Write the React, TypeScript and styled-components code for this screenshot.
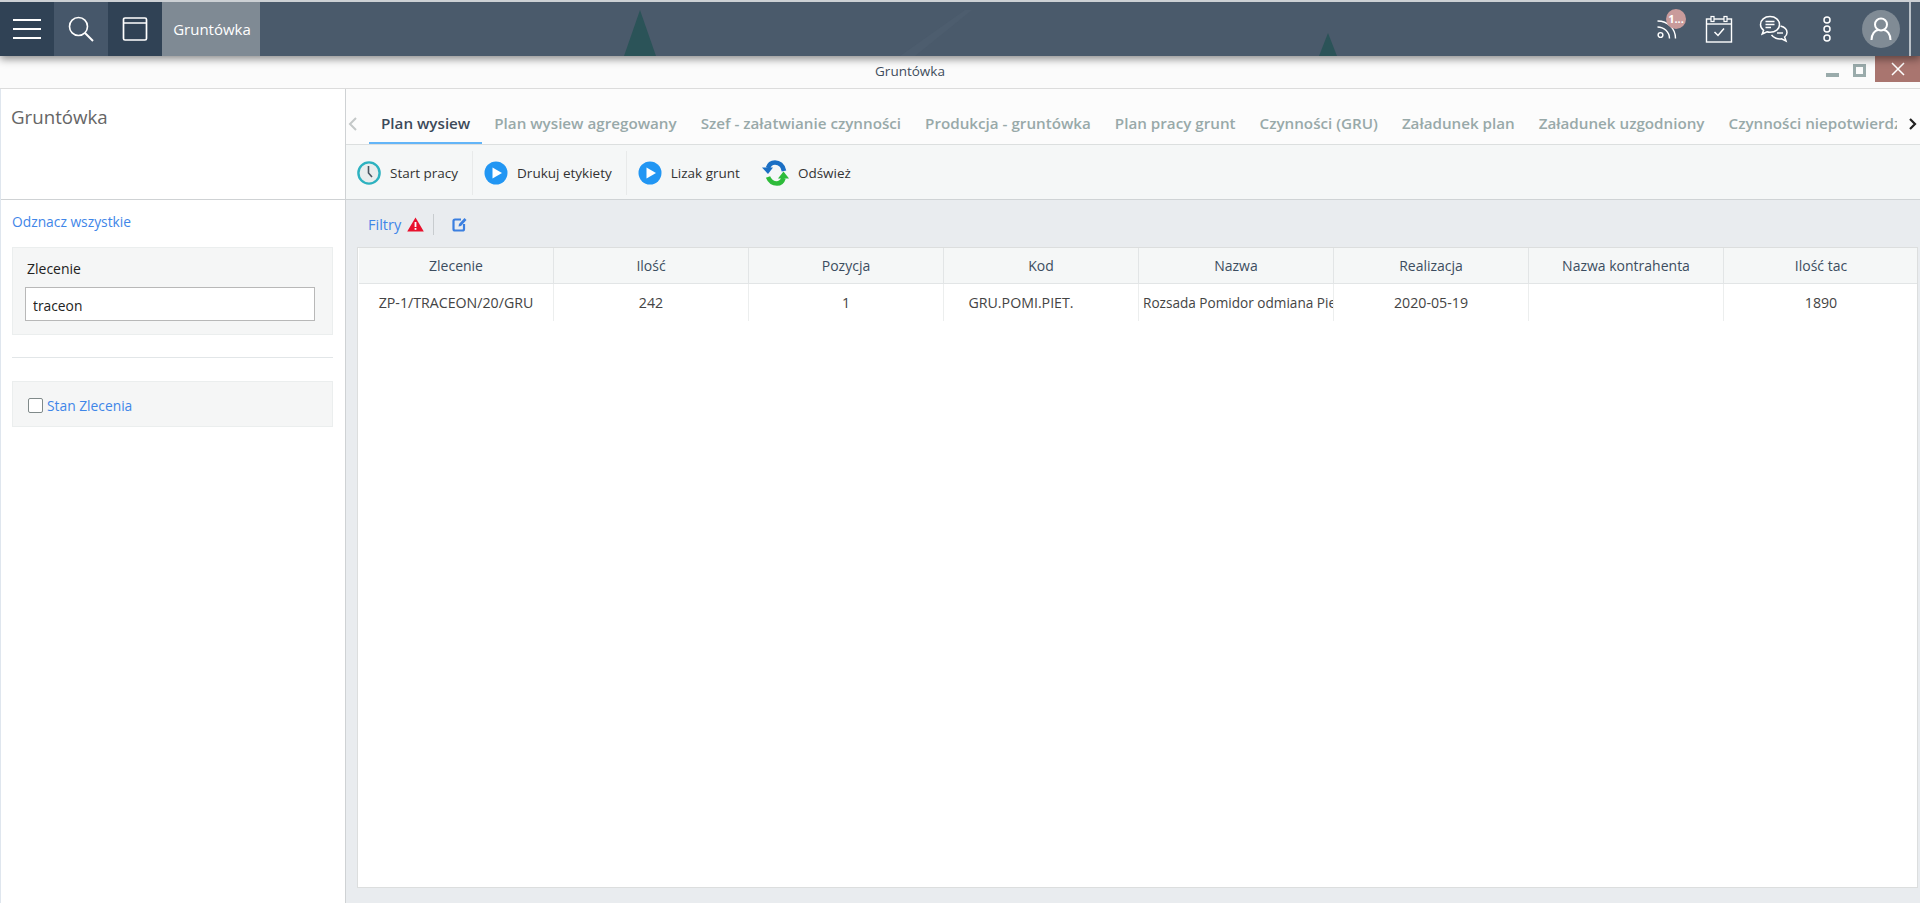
import React from "react";
import styled, { createGlobalStyle } from "styled-components";

const GlobalStyle = createGlobalStyle`
  html, body {
    margin: 0;
    padding: 0;
    background: #fff;
    font-family: "Open Sans", "Noto Sans", sans-serif;
    font-size: 13px;
    overflow: hidden;
  }
  * {
    box-sizing: border-box;
  }
`;

const Page = styled.div`
  display: flex;
  flex-direction: column;
  width: 1920px;
  height: 903px;
  overflow: hidden;
`;

const TopBar = styled.header`
  position: relative;
  z-index: 2;
  display: flex;
  align-items: stretch;
  flex: 0 0 56px;
  border-top: 2px solid #ccd0d4;
  background: #4a5a6b;
  box-shadow: 0 3px 8px rgba(0, 0, 0, 0.45);
`;

const Trees = styled.svg`
  position: absolute;
  left: 0;
  top: 0;
  width: 100%;
  height: 100%;
  filter: blur(0.7px);
`;

const BarButton = styled.div<{ $dark?: boolean }>`
  position: relative;
  display: flex;
  align-items: center;
  justify-content: center;
  width: 54px;
  background: ${(p) => (p.$dark ? "#304255" : "#46576a")};
`;

const OpenTab = styled.div`
  position: relative;
  display: flex;
  align-items: center;
  justify-content: center;
  width: 98px;
  padding-left: 2px;
  background: #7f8a94;
  color: #fff;
  font-size: 15px;
`;

const BarRight = styled.div`
  position: relative;
  display: flex;
  align-items: center;
  margin-left: auto;
  height: 100%;
`;

const BarIcon = styled.div<{ $width: number }>`
  position: relative;
  display: flex;
  align-items: center;
  justify-content: center;
  width: ${(p) => p.$width}px;
  height: 100%;
`;

const Badge = styled.span`
  position: absolute;
  left: 24px;
  top: 7px;
  width: 20px;
  height: 20px;
  border-radius: 50%;
  background: #c99b9b;
  color: #fff;
  font-size: 11px;
  font-weight: 700;
  line-height: 20px;
  text-align: center;
`;

const Avatar = styled.div`
  display: flex;
  align-items: center;
  justify-content: center;
  width: 38px;
  height: 38px;
  margin: 0 9px 0 10px;
  border-radius: 50%;
  background: #808b95;
`;

const BarEdge = styled.div`
  width: 2px;
  height: 100%;
  margin-right: 9px;
  background: #b9c1c8;
`;

const WindowBar = styled.div`
  display: flex;
  flex: 0 0 33px;
  border-bottom: 1px solid #dcdcdc;
  background: #fbfbfb;
`;

const WindowTitle = styled.div`
  flex: 1;
  padding: 6px 6px 0 0;
  color: #3f4d5c;
  font-size: 13.5px;
  text-align: center;
`;

const WindowControls = styled.div`
  display: flex;
  align-items: flex-start;
`;

const Minimize = styled.div`
  width: 13px;
  height: 4px;
  margin: 17px 14px 0 0;
  background: #9aabab;
`;

const Maximize = styled.div`
  width: 13px;
  height: 13px;
  margin: 8px 9px 0 0;
  border: 3px solid #9aabab;
`;

const Close = styled.div`
  display: flex;
  align-items: center;
  justify-content: center;
  width: 45px;
  height: 26px;
  background: #a9756f;
`;

const Main = styled.div`
  display: flex;
  flex: 1;
  min-height: 0;
`;

const Sidebar = styled.aside`
  display: flex;
  flex-direction: column;
  flex: 0 0 346px;
  border-left: 1px solid #dfe6ee;
  border-right: 1px solid #cfd2d4;
  background: #fff;
`;

const SidebarTitle = styled.div`
  flex: 0 0 111px;
  padding: 15px 10px 0;
  border-bottom: 1px solid #cfd2d4;
  color: #666;
  font-size: 18.7px;
`;

const SidebarBody = styled.div`
  padding: 12px 12px 0 11px;
`;

const Link = styled.a`
  color: #3f86e8;
  font-size: 13.8px;
`;

const SelectAll = styled(Link)`
  display: block;
  height: 20px;
  margin-bottom: 15px;
`;

const FilterBox = styled.div<{ $height: number }>`
  height: ${(p) => p.$height}px;
  border: 1px solid #ebeeee;
  background: #f5f6f6;
`;

const FieldLabel = styled.div`
  padding: 11px 0 0 14px;
  color: #222;
  font-size: 14px;
`;

const TextInput = styled.input`
  display: block;
  width: 290px;
  height: 34px;
  margin: 9px 0 0 12px;
  padding: 2px 7px 0;
  border: 1px solid #b8b8b8;
  border-radius: 0;
  outline: none;
  background: #fff;
  color: #222;
  font-family: inherit;
  font-size: 13.8px;
`;

const Divider = styled.hr`
  height: 1px;
  margin: 22px 0 23px;
  border: 0;
  background: #e2e6e8;
`;

const CheckRow = styled.div`
  display: flex;
  align-items: center;
  gap: 4px;
  padding: 14px 0 0 15px;
`;

const CheckBox = styled.span`
  width: 15px;
  height: 15px;
  border: 1.5px solid #808a8a;
  border-radius: 2px;
  background: #fff;
`;

const Content = styled.div`
  display: flex;
  flex-direction: column;
  flex: 1;
  min-width: 0;
`;

const TabBar = styled.div`
  display: flex;
  align-items: stretch;
  flex: 0 0 56px;
  border-bottom: 1px solid #dcdfdf;
  background: #fcfcfc;
`;

const TabArrow = styled.div<{ $width: number; $offset: number }>`
  display: flex;
  align-items: center;
  justify-content: center;
  flex: 0 0 ${(p) => p.$width}px;
  padding: 15px ${(p) => (p.$offset < 0 ? -p.$offset : 0)}px 0 ${(p) => (p.$offset > 0 ? p.$offset : 0)}px;
`;

const TabStrip = styled.div`
  display: flex;
  flex: 1;
  min-width: 0;
  overflow: hidden;
`;

const Tab = styled.div<{ $active?: boolean }>`
  flex: none;
  height: 55px;
  padding: 24px 12px 0;
  border-bottom: 2px solid ${(p) => (p.$active ? "#63b5f8" : "transparent")};
  color: ${(p) => (p.$active ? "#3c4a5a" : "#98a9a9")};
  font-size: 15.2px;
  font-weight: 600;
  white-space: nowrap;
`;

const Toolbar = styled.div`
  display: flex;
  align-items: center;
  flex: 0 0 55px;
  padding: 2px 0 0 11px;
  border-bottom: 1px solid #cfd3d5;
  background: #f5f7f7;
`;

const ToolButton = styled.div<{ $separated?: boolean }>`
  display: flex;
  align-items: center;
  gap: 9px;
  height: 44px;
  padding-right: ${(p) => (p.$separated ? 14 : 22)}px;
  margin-right: ${(p) => (p.$separated ? 11 : 0)}px;
  border-right: ${(p) => (p.$separated ? "1px solid #e8eaea" : "none")};
  color: #333;
  font-size: 13.5px;
`;

const Workspace = styled.div`
  display: flex;
  flex-direction: column;
  flex: 1;
  min-height: 0;
  padding: 14px 2px 15px 11px;
  background: #e9ecef;
`;

const FilterBar = styled.div`
  display: flex;
  align-items: center;
  flex: 0 0 33px;
  padding: 0 0 12px 11px;
`;

const FilterLink = styled(Link)`
  margin-right: 6px;
  font-size: 14.5px;
`;

const FilterSeparator = styled.span`
  width: 1px;
  height: 21px;
  margin: 0 18px 0 9px;
  background: #c8cccf;
`;

const TableCard = styled.div`
  flex: 1;
  border: 1px solid #dcdede;
  background: #fff;
  overflow: hidden;
`;

const TableGrid = styled.div`
  display: grid;
  grid-template-columns: repeat(8, 195px);
  margin-left: 1px;
`;

const HeaderCell = styled.div`
  height: 36px;
  border-right: 1px solid #e2e5e6;
  border-bottom: 1px solid #e2e5e6;
  background: #f5f7f7;
  color: #3c4d60;
  font-size: 14px;
  line-height: 36px;
  text-align: center;
`;

// $clip: long name, left aligned and cut by the column; $inset: value with trailing blanks
const Cell = styled.div<{ $clip?: boolean; $inset?: boolean }>`
  height: 37px;
  padding: 0 ${(p) => (p.$inset ? 44 : 4)}px 0 4px;
  border-right: 1px solid #eceeee;
  color: #444;
  font-size: ${(p) => (p.$clip ? 13.6 : 14.2)}px;
  line-height: 37px;
  text-align: ${(p) => (p.$clip ? "left" : "center")};
  white-space: nowrap;
  overflow: hidden;
`;

const tabs = [
  "Plan wysiew",
  "Plan wysiew agregowany",
  "Szef - załatwianie czynności",
  "Produkcja - gruntówka",
  "Plan pracy grunt",
  "Czynności (GRU)",
  "Załadunek plan",
  "Załadunek uzgodniony",
  "Czynności niepotwierdzone",
];

const columns = [
  "Zlecenie",
  "Ilość",
  "Pozycja",
  "Kod",
  "Nazwa",
  "Realizacja",
  "Nazwa kontrahenta",
  "Ilość tac",
];

const row = [
  "ZP-1/TRACEON/20/GRU",
  "242",
  "1",
  "GRU.POMI.PIET.",
  "Rozsada Pomidor odmiana Piet",
  "2020-05-19",
  "",
  "1890",
];

const PlayIcon = () => (
  <svg width="24" height="24" viewBox="0 0 24 24">
    <circle cx="12" cy="12" r="11.5" fill="#2196f3" />
    <path d="M8.5 6.5 L18 12 L8.5 17.5 Z" fill="#fff" />
  </svg>
);

const ClockIcon = () => (
  <svg width="24" height="24" viewBox="0 0 24 24">
    <circle cx="12" cy="12" r="10.6" fill="#e9eded" stroke="#2db2c0" strokeWidth="2.4" />
    <path d="M11.5 5 L11.5 12 L15 16" fill="none" stroke="#4a5560" strokeWidth="1.6" />
  </svg>
);

const RefreshIcon = () => (
  <svg width="27" height="28" viewBox="0 0 27 28">
    <path d="M22 12 C21 6 17 3.5 13 3.5 C9.5 3.5 7 5.5 6 9" fill="none" stroke="#1b6fc4" strokeWidth="4.6" />
    <path d="M0 8.5 L11 8.5 L6 15 Z" fill="#1b6fc4" />
    <path d="M6 18 C8 23 12 24.5 15 24.5 C18 24.5 20.5 22.5 21.5 19" fill="none" stroke="#2dbb3a" strokeWidth="4.6" />
    <path d="M16 19.5 L27 19.5 L21.5 12.5 Z" fill="#2dbb3a" />
  </svg>
);

const WarningIcon = () => (
  <svg width="17" height="15" viewBox="0 0 17 15">
    <path d="M8.5 0.5 L16.8 14.5 L0.2 14.5 Z" fill="#e8112d" />
    <rect x="7.6" y="5" width="1.8" height="5" fill="#fff" />
    <rect x="7.6" y="11" width="1.8" height="1.8" fill="#fff" />
  </svg>
);

const EditIcon = () => (
  <svg width="15" height="15" viewBox="0 0 15 15">
    <path d="M9 2.5 L3 2.5 Q1.5 2.5 1.5 4 L1.5 12 Q1.5 13.5 3 13.5 L10.5 13.5 Q12 13.5 12 12 L12 7" fill="none" stroke="#3b7fe0" strokeWidth="2.2" />
    <path d="M6.5 9.5 L7 7 L12.5 1 L14.5 3 L9 9 Z" fill="#3b7fe0" />
  </svg>
);

const Chevron = ({ left, color }: { left?: boolean; color: string }) => (
  <svg width="10" height="14" viewBox="0 0 10 14">
    <path d={left ? "M8 1 L2 7 L8 13" : "M3 2 L8 7 L3 12"} fill="none" stroke={color} strokeWidth={left ? 2 : 2.2} />
  </svg>
);

const App = () => {
  return (
    <Page>
      <GlobalStyle />
      <TopBar>
        <Trees viewBox="0 0 1920 54" preserveAspectRatio="none">
          <path d="M640 8 L656 54 L624 54 Z" fill="#2b5358" />
          <path d="M1328 31 L1337 54 L1319 54 Z" fill="#2b5358" />
          <path d="M900 54 L965 8 L972 8 L915 54 Z" fill="#4d5d6e" />
        </Trees>
        <BarButton $dark>
          <svg width="30" height="22" viewBox="0 0 30 22">
            <path d="M1 2 H29 M1 11 H29 M1 20 H29" stroke="#fff" strokeWidth="2.2" />
          </svg>
        </BarButton>
        <BarButton>
          <svg width="26" height="26" viewBox="0 0 26 26">
            <circle cx="10.5" cy="10.5" r="9" fill="none" stroke="#fff" strokeWidth="1.6" />
            <path d="M17 17 L25 25" stroke="#fff" strokeWidth="2" />
          </svg>
        </BarButton>
        <BarButton $dark>
          <svg width="26" height="26" viewBox="0 0 26 26">
            <rect x="1.5" y="2" width="23" height="22" rx="1.5" fill="none" stroke="#fff" strokeWidth="1.7" />
            <path d="M1.5 7 H24.5" stroke="#fff" strokeWidth="1.5" />
          </svg>
        </BarButton>
        <OpenTab>Gruntówka</OpenTab>
        <BarRight>
          <BarIcon $width={50}>
            <svg width="20" height="20" viewBox="0 0 20 20">
              <circle cx="3.5" cy="16" r="2.4" fill="none" stroke="#fff" strokeWidth="1.4" />
              <path d="M0.5 8 C7 8 12.5 13 12.5 19.5 M0.5 2 C11 2 18.5 9.5 18.5 19.5" fill="none" stroke="#fff" strokeWidth="1.4" />
            </svg>
            <Badge>1...</Badge>
          </BarIcon>
          <BarIcon $width={54}>
            <svg width="28" height="28" viewBox="0 0 28 28">
              <rect x="1.5" y="4" width="25" height="23" fill="none" stroke="#fff" strokeWidth="1.4" />
              <path d="M1.5 9 H26.5" stroke="#fff" strokeWidth="1.4" />
              <rect x="6" y="1.5" width="3" height="5" fill="#4a5a6b" stroke="#fff" strokeWidth="1.2" />
              <rect x="19" y="1.5" width="3" height="5" fill="#4a5a6b" stroke="#fff" strokeWidth="1.2" />
              <path d="M9.5 17 L13 20.5 L19 13.5" fill="none" stroke="#fff" strokeWidth="1.5" />
            </svg>
          </BarIcon>
          <BarIcon $width={56}>
            <svg width="30" height="28" viewBox="0 0 30 28">
              <path d="M11 1.5 C5.5 1.5 1.5 5 1.5 9.5 C1.5 12 2.8 14 4.6 15.3 L3.2 19 L8 16.8 C9 17.2 10 17.3 11 17.3 C16.5 17.3 20.5 14 20.5 9.5 C20.5 5 16.5 1.5 11 1.5 Z" fill="none" stroke="#fff" strokeWidth="1.5" />
              <path d="M6.5 6.5 H15.5 M6.5 9.5 H15.5 M6.5 12.5 H12" stroke="#fff" strokeWidth="1.5" />
              <path d="M21.5 11 C25.5 12 28 14.5 28 17.5 C28 19.5 27 21 25.6 22 L27 26 L22.5 23.8 C19 24.5 14.5 23 12.5 19.8" fill="none" stroke="#fff" strokeWidth="1.5" />
              <path d="M18 18 H24" stroke="#fff" strokeWidth="1.4" />
            </svg>
          </BarIcon>
          <BarIcon $width={50}>
            <svg width="10" height="28" viewBox="0 0 10 28">
              <circle cx="5" cy="5" r="3" fill="none" stroke="#fff" strokeWidth="1.5" />
              <circle cx="5" cy="14" r="3" fill="none" stroke="#fff" strokeWidth="1.5" />
              <circle cx="5" cy="23" r="3" fill="none" stroke="#fff" strokeWidth="1.5" />
            </svg>
          </BarIcon>
          <Avatar>
            <svg width="22" height="24" viewBox="0 0 22 24">
              <circle cx="11" cy="7.5" r="6" fill="none" stroke="#fff" strokeWidth="2" />
              <path d="M1.5 23 C1.5 17 5 13.5 8 13 M20.5 23 C20.5 17 17 13.5 14 13" fill="none" stroke="#fff" strokeWidth="2" />
            </svg>
          </Avatar>
          <BarEdge />
        </BarRight>
      </TopBar>

      <WindowBar>
        <WindowTitle>Gruntówka</WindowTitle>
        <WindowControls>
          <Minimize />
          <Maximize />
          <Close>
            <svg width="14" height="14" viewBox="0 0 14 14">
              <path d="M1 1 L13 13 M13 1 L1 13" stroke="#fff" strokeWidth="1.5" />
            </svg>
          </Close>
        </WindowControls>
      </WindowBar>

      <Main>
        <Sidebar>
          <SidebarTitle>Gruntówka</SidebarTitle>
          <SidebarBody>
            <SelectAll>Odznacz wszystkie</SelectAll>
            <FilterBox $height={88}>
              <FieldLabel>Zlecenie</FieldLabel>
              <TextInput defaultValue="traceon" />
            </FilterBox>
            <Divider />
            <FilterBox $height={46}>
              <CheckRow>
                <CheckBox />
                <Link>Stan Zlecenia</Link>
              </CheckRow>
            </FilterBox>
          </SidebarBody>
        </Sidebar>

        <Content>
          <TabBar>
            <TabArrow $width={23} $offset={-10}>
              <Chevron left color="#c4c8c8" />
            </TabArrow>
            <TabStrip>
              {tabs.map((t, i) => (
                <Tab key={t} $active={i === 0}>
                  {t}
                </Tab>
              ))}
            </TabStrip>
            <TabArrow $width={23} $offset={6}>
              <Chevron color="#222" />
            </TabArrow>
          </TabBar>

          <Toolbar>
            <ToolButton $separated>
              <ClockIcon />
              Start pracy
            </ToolButton>
            <ToolButton $separated>
              <PlayIcon />
              Drukuj etykiety
            </ToolButton>
            <ToolButton>
              <PlayIcon />
              Lizak grunt
            </ToolButton>
            <ToolButton>
              <RefreshIcon />
              Odśwież
            </ToolButton>
          </Toolbar>

          <Workspace>
            <FilterBar>
              <FilterLink>Filtry</FilterLink>
              <WarningIcon />
              <FilterSeparator />
              <EditIcon />
            </FilterBar>
            <TableCard>
              <TableGrid>
                {columns.map((c) => (
                  <HeaderCell key={c}>{c}</HeaderCell>
                ))}
                {row.map((v, i) => (
                  <Cell key={i} $clip={i === 4} $inset={i === 3}>
                    {v}
                  </Cell>
                ))}
              </TableGrid>
            </TableCard>
          </Workspace>
        </Content>
      </Main>
    </Page>
  );
};

export default App;
